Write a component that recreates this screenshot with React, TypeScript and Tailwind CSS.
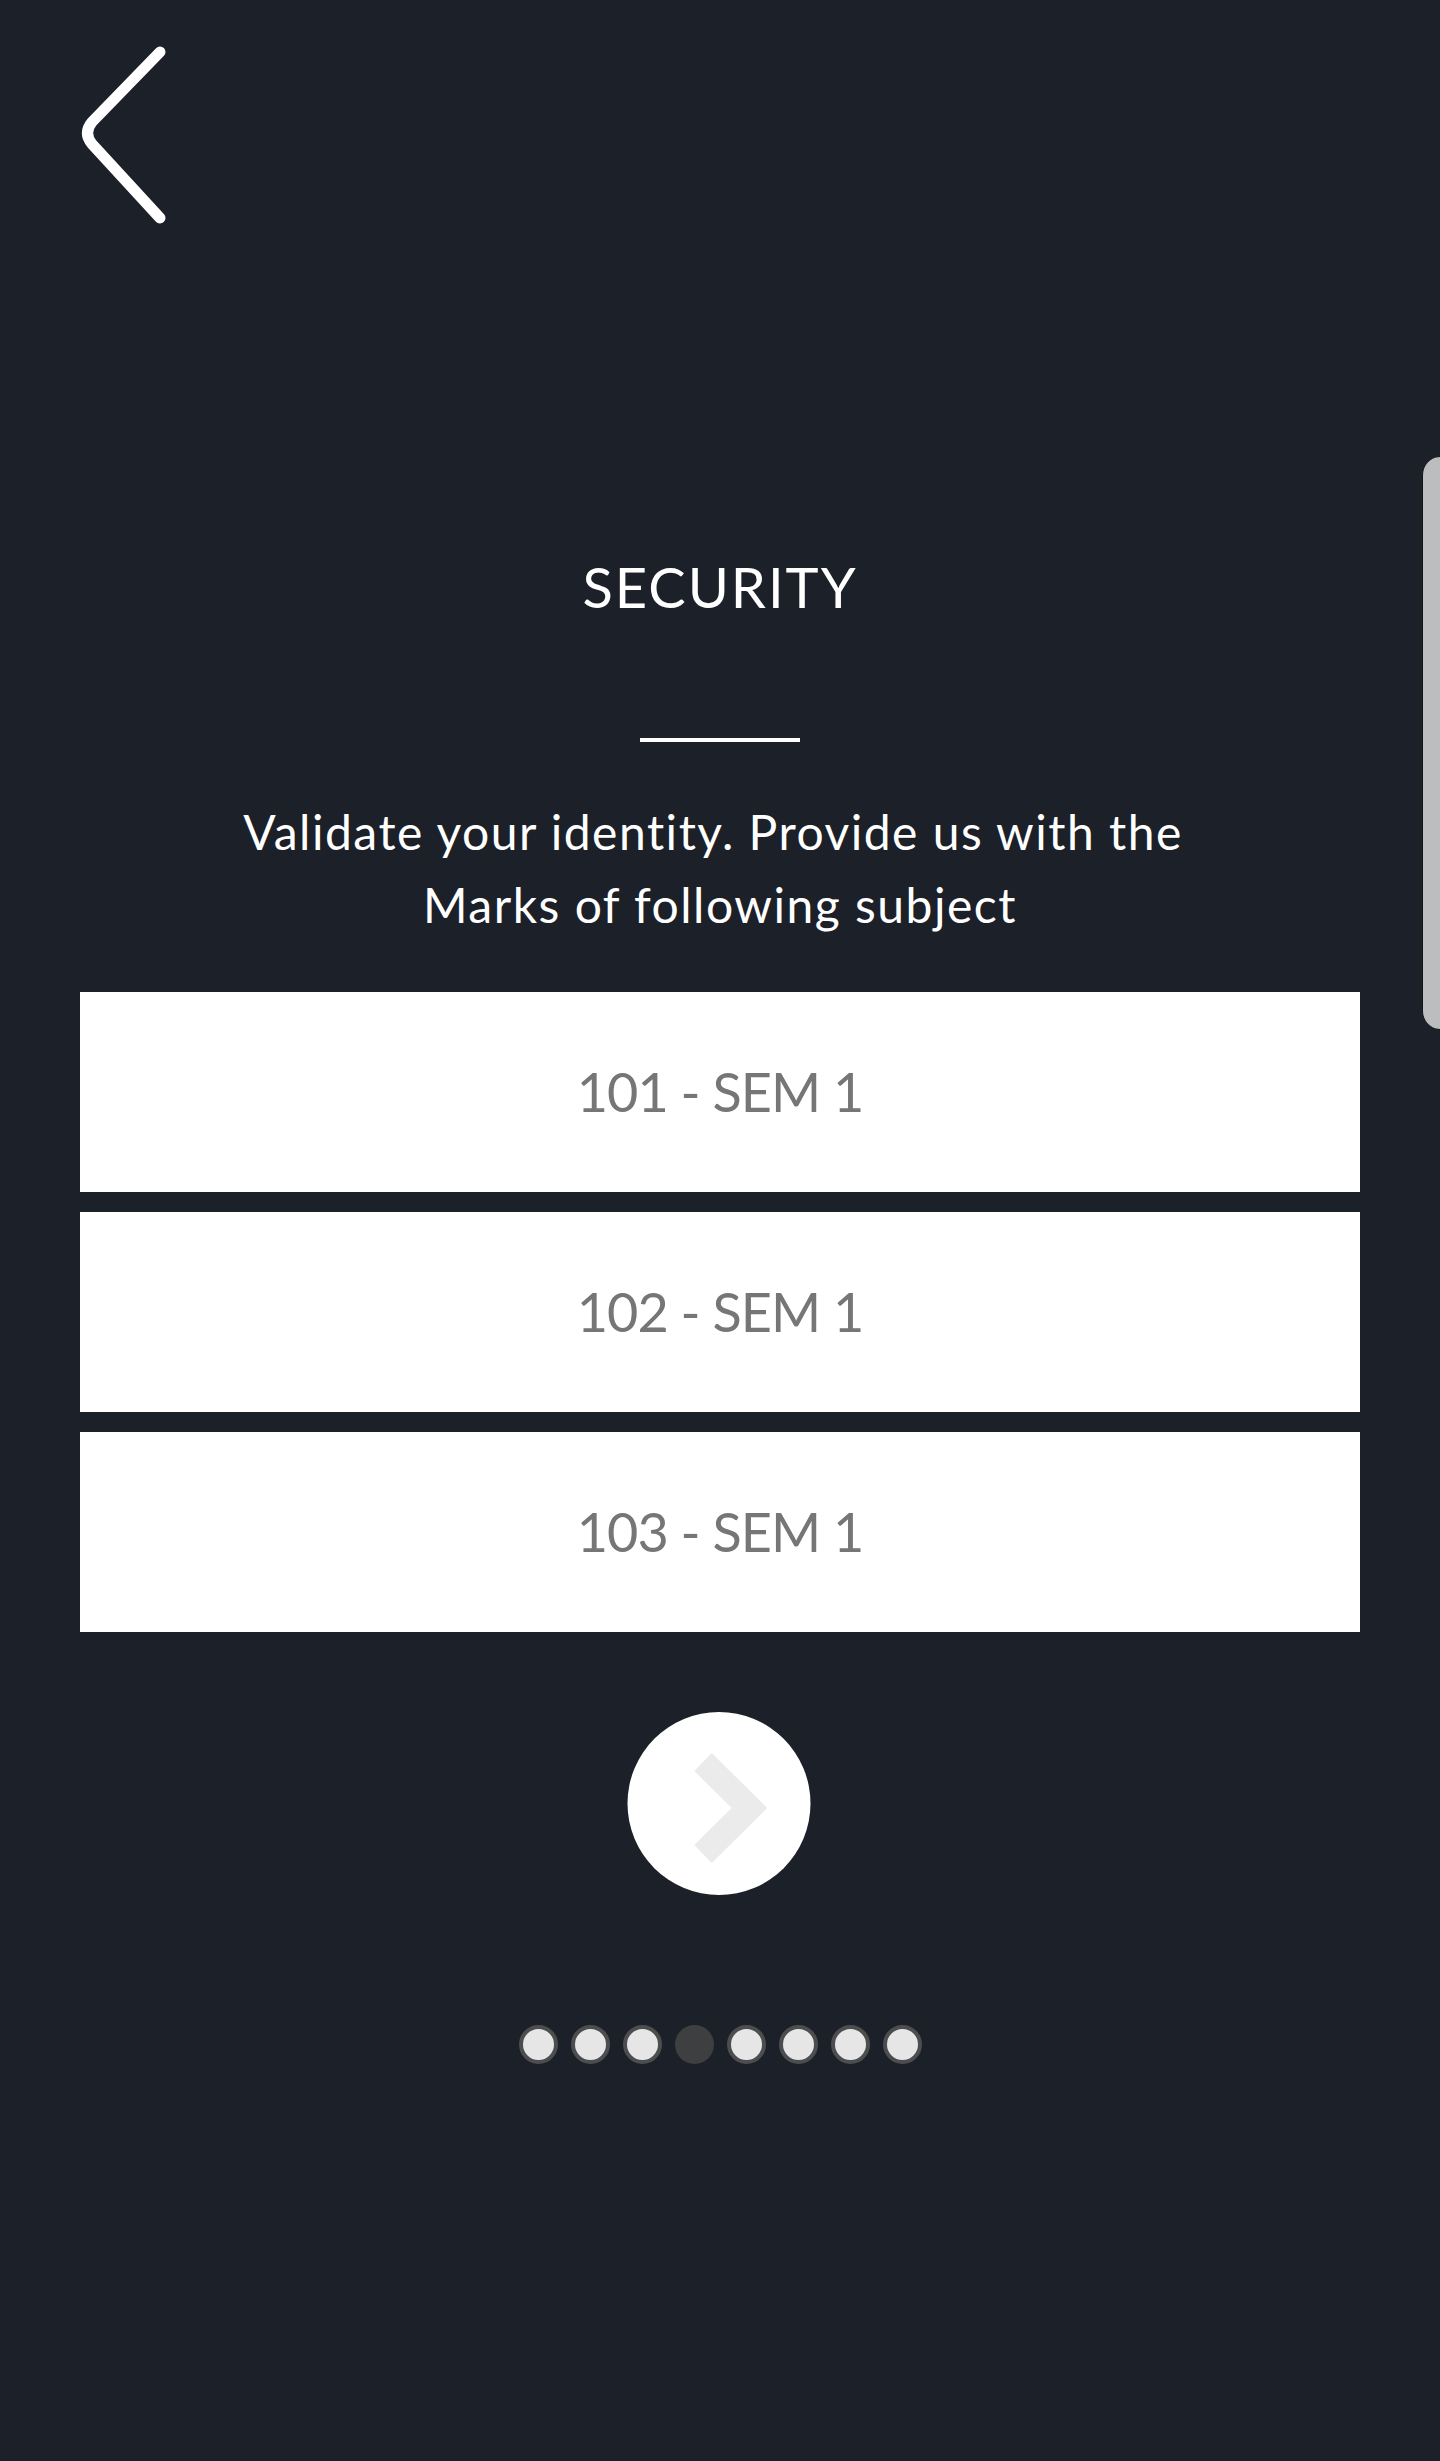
import React from "react";

const subjects = ["101 - SEM 1", "102 - SEM 1", "103 - SEM 1"];

export default function App() {
  return (
    <div className="relative w-full min-h-[2461px] overflow-hidden bg-[#1c2028] font-['Lato','Open_Sans',sans-serif]">
      {/* back chevron */}
      <svg width="180" height="240" viewBox="0 0 180 240" className="block">
        <path
          d="M160 52 L92 122 Q83 133 92 144 L160 218"
          fill="none"
          stroke="#ffffff"
          strokeWidth="11"
          strokeLinecap="round"
          strokeLinejoin="round"
        />
      </svg>

      {/* side handle */}
      <div className="absolute right-0 top-[457px] h-[572px] w-[18px] rounded-l-[22px] border-l border-[#111418] bg-[#bcbdbf]" />

      <h1 className="mt-[319px] text-center text-[56px] leading-[56px] tracking-[2px] text-white">
        SECURITY
      </h1>

      <div className="mx-auto mt-[123px] h-[4px] w-[160px] bg-white" />

      <p className="mt-[53px] text-center text-[48px] leading-[73px] tracking-[1.5px] text-white">
        {"Validate your identity. Provide us with the\u00a0"}
        <br />
        Marks of following subject
      </p>

      <div className="mx-[80px] mt-[51px] flex flex-col gap-[20px]">
        {subjects.map((s) => (
          <div
            key={s}
            className="flex h-[200px] items-center justify-center bg-white text-[54px] leading-[54px] tracking-[-1px] text-[#767676]"
          >
            {s}
          </div>
        ))}
      </div>

      <div className="mt-[80px] flex justify-center">
        <div className="-translate-x-[1.5px] flex h-[183px] w-[183px] items-center justify-center rounded-full bg-white">
          <svg width="183" height="183" viewBox="0 0 183 183">
            <polyline
              points="75.5,50 122,96 75.5,142"
              fill="none"
              stroke="#ebebeb"
              strokeWidth="25"
              strokeLinecap="butt"
              strokeLinejoin="miter"
            />
          </svg>
        </div>
      </div>

      <div className="mt-[130px] flex items-center justify-center gap-[13px]">
        {Array.from({ length: 8 }).map((_, i) =>
          i === 3 ? (
            <div key={i} className="h-[39px] w-[39px] rounded-full bg-[#3e3f41]" />
          ) : (
            <div
              key={i}
              className="h-[39px] w-[39px] rounded-full border-[4px] border-[#4c4d4f] bg-[#e6e6e6]"
            />
          )
        )}
      </div>
    </div>
  );
}
